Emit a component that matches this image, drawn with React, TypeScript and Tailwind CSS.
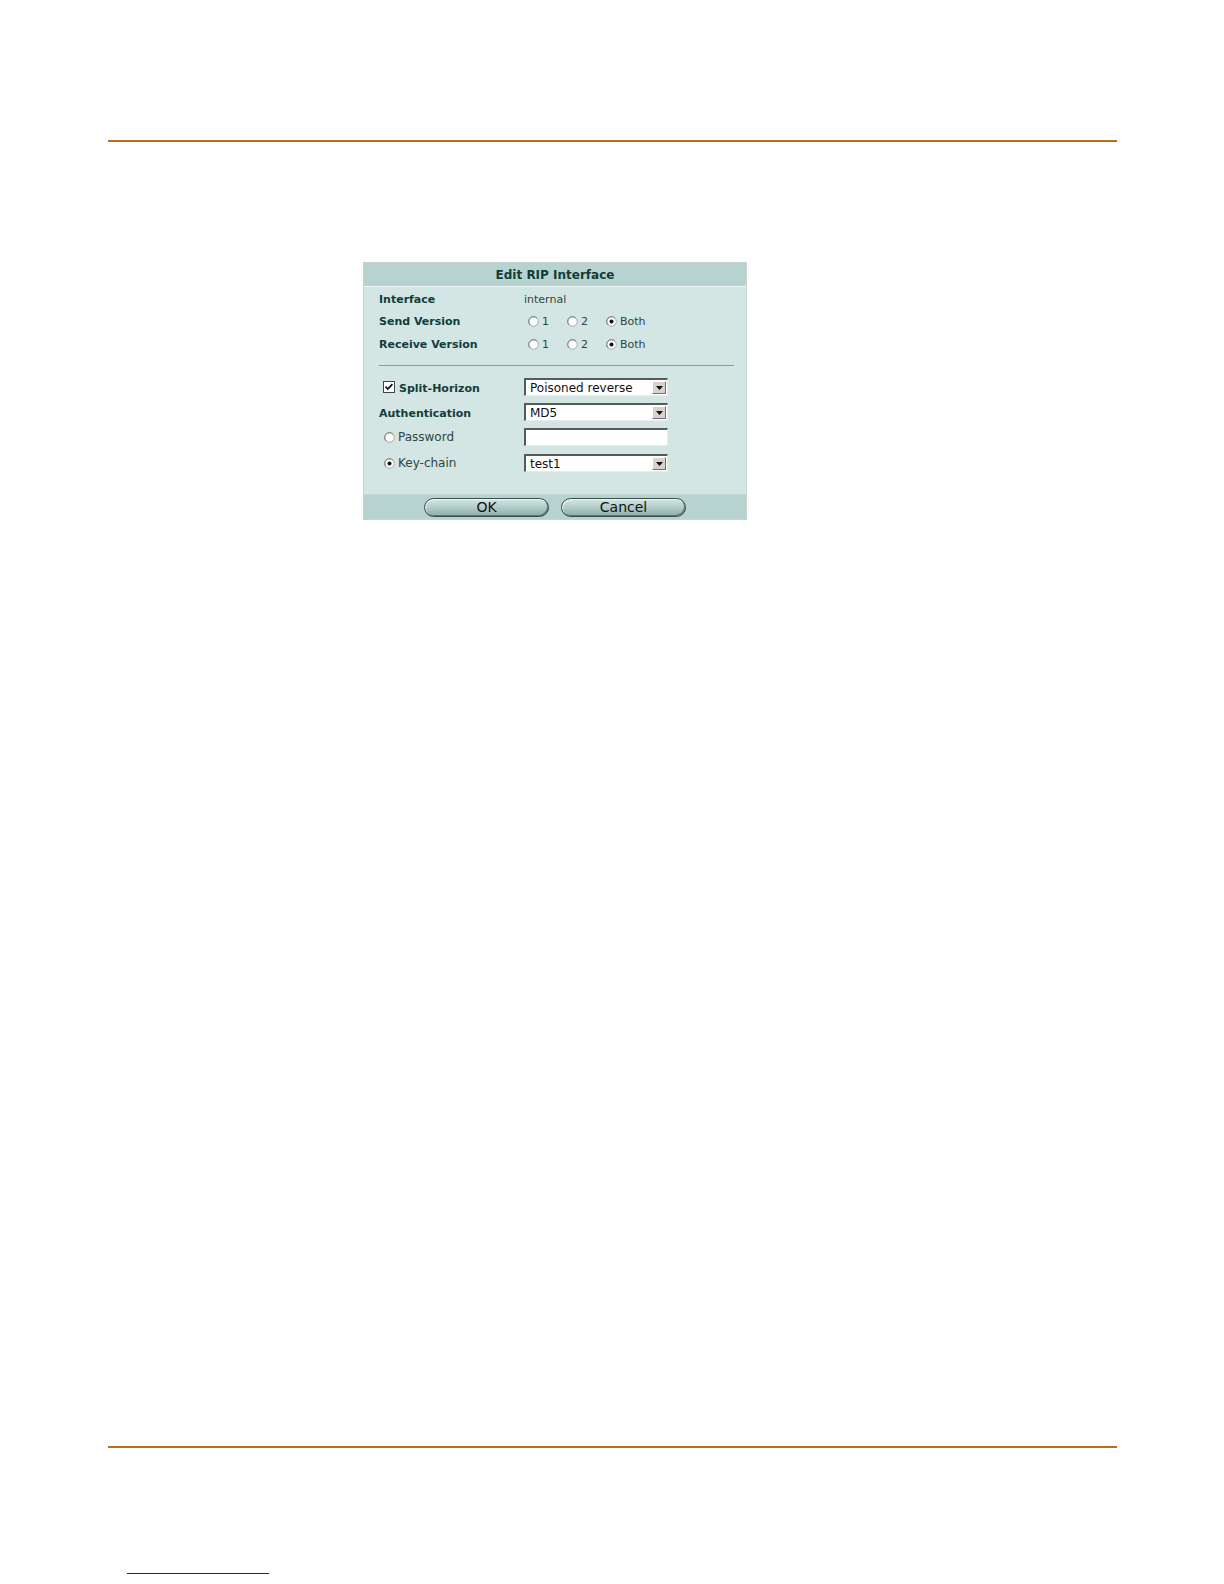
import type { ReactNode } from 'react';

const LABEL = 'text-[11px] font-bold text-[#123c3a] leading-none';
const TEXT = 'text-[11px] text-[#2f4443] leading-none';

function Radio({ checked = false }: { checked?: boolean }): JSX.Element {
  return (
    <svg width="11" height="11" viewBox="0 0 12 12" className="shrink-0">
      <circle cx="6" cy="6" r="5.2" fill="#ffffff" stroke="#9aa4a4" strokeWidth="1" />
      <path d="M2.3 9.7 A5.2 5.2 0 0 1 9.7 2.3" fill="none" stroke="#6f7777" strokeWidth="1" />
      {checked ? <circle cx="6" cy="6" r="2.2" fill="#111111" /> : null}
    </svg>
  );
}

function Checkbox(): JSX.Element {
  return (
    <svg width="12" height="12" viewBox="0 0 12 12" className="shrink-0">
      <rect x="0.5" y="0.5" width="11" height="11" fill="#ffffff" stroke="#3c4646" />
      <path d="M2.6 5.6 L4.8 8 L9.4 3.2" fill="none" stroke="#111111" strokeWidth="1.8" />
    </svg>
  );
}

function RadioGroup({ selected }: { selected: string }): JSX.Element {
  return (
    <div className="ml-[4px] flex items-center">
      {['1', '2', 'Both'].map((option) => (
        <div key={option} className="flex w-[39px] items-center gap-[3px]">
          <Radio checked={option === selected} />
          <span className={TEXT}>{option}</span>
        </div>
      ))}
    </div>
  );
}

function Field({ children }: { children?: ReactNode }): JSX.Element {
  return (
    <div className="flex h-[18px] w-[144px] items-stretch border-t-2 border-l-2 border-b border-r border-t-[#555b5b] border-l-[#555b5b] border-b-[#e6ecec] border-r-[#e6ecec] bg-white">
      {children}
    </div>
  );
}

function Select({ value }: { value: string }): JSX.Element {
  return (
    <Field>
      <span className="flex flex-1 items-center pl-[4px] text-[12px] leading-none text-[#111]">{value}</span>
      <span className="m-[1px] flex w-[14px] items-center justify-center border border-t-[#ffffff] border-l-[#ffffff] border-b-[#6f6f6f] border-r-[#6f6f6f] bg-[#d6d3cc]">
        <svg width="7" height="4" viewBox="0 0 7 4">
          <path d="M0 0 H7 L3.5 4 Z" fill="#111" />
        </svg>
      </span>
    </Field>
  );
}

function Row({ label, children, className = 'h-[22px]' }: { label: ReactNode; children: ReactNode; className?: string }): JSX.Element {
  return (
    <div className={`flex items-center ${className}`}>
      <div className="flex w-[145px] items-center">{label}</div>
      {children}
    </div>
  );
}

function PillButton({ children }: { children: ReactNode }): JSX.Element {
  return (
    <button
      type="button"
      className="flex h-[19px] w-[125px] items-center justify-center rounded-full border border-[#3b4b49] bg-gradient-to-b from-[#d6e6e3] via-[#b2ccc8] to-[#8eaea9] text-[14px] leading-none text-[#111] shadow-[inset_-1px_-1px_0_#5f7774,inset_1px_1px_0_#eef5f4]"
    >
      {children}
    </button>
  );
}

export default function App(): JSX.Element {
  return (
    <div className="flex min-h-[1584px] w-[1224px] flex-col bg-white font-['DejaVu_Sans',Verdana,sans-serif]">
      <div className="ml-[108px] mt-[140px] h-[2px] w-[1009px] bg-[#b5701a]" />

      <div className="ml-[363px] mt-[120px] w-[384px] border border-[#c9d3d3]">
        <div className="flex h-[24px] items-center justify-center border-b border-b-[#eef5f4] bg-[#b7d3d0] text-[12px] font-bold leading-none text-[#123c3a]">
          Edit RIP Interface
        </div>

        <div className="bg-[#d3e6e4] pb-[22px] pl-[15px] pr-[14px] pt-[1px]">
          <Row label={<span className={LABEL}>Interface</span>}>
            <span className={TEXT}>internal</span>
          </Row>
          <Row label={<span className={LABEL}>Send Version</span>}>
            <RadioGroup selected="Both" />
          </Row>
          <Row label={<span className={LABEL}>Receive Version</span>} className="h-[24px]">
            <RadioGroup selected="Both" />
          </Row>

          <div className="mt-[9px] h-px w-[355px] bg-[#8d9a99]" />

          <div className="mt-[12px] flex flex-col">
            <Row
              className="h-[18px]"
              label={
                <span className="ml-[4px] flex items-center gap-[4px]">
                  <Checkbox />
                  <span className={`${LABEL} pt-[3px]`}>Split-Horizon</span>
                </span>
              }
            >
              <Select value="Poisoned reverse" />
            </Row>
            <Row className="mt-[7px] h-[18px]" label={<span className={`${LABEL} pt-[2px]`}>Authentication</span>}>
              <Select value="MD5" />
            </Row>
            <Row
              className="mt-[7px] h-[18px]"
              label={
                <span className="ml-[5px] flex items-center gap-[3px]">
                  <Radio />
                  <span className={`${TEXT} text-[12px]`}>Password</span>
                </span>
              }
            >
              <Field />
            </Row>
            <Row
              className="mt-[8px] h-[18px]"
              label={
                <span className="ml-[5px] flex items-center gap-[3px]">
                  <Radio checked />
                  <span className={`${TEXT} text-[12px]`}>Key-chain</span>
                </span>
              }
            >
              <Select value="test1" />
            </Row>
          </div>
        </div>

        <div className="flex h-[25px] items-center justify-center gap-[12px] border-t border-t-[#c2d8d5] bg-[#b7d3d0]">
          <PillButton>OK</PillButton>
          <PillButton>Cancel</PillButton>
        </div>
      </div>

      <div className="ml-[108px] mt-[926px] h-[2px] w-[1009px] bg-[#b5701a]" />

      <div className="ml-[127px] mt-[125px] h-px w-[142px] bg-[#1c1c7c]" />
    </div>
  );
}
